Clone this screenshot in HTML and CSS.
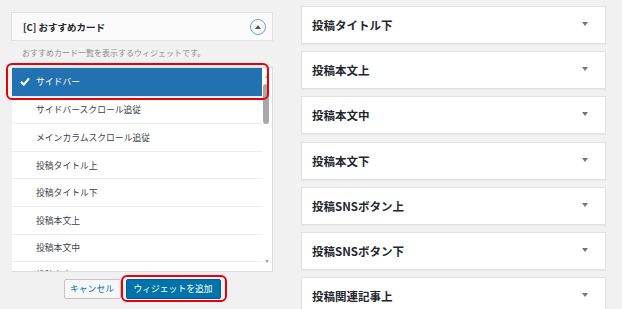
FILE: index.html
```html
<!DOCTYPE html>
<html lang="ja">
<head>
  <meta charset="UTF-8" />
  <title>ウィジェット</title>
  <link rel="stylesheet" href="styles.css">
</head>
<body>
  <div class="page">
    <!-- left: widget being added -->
    <div class="add-panel">
      <div class="widget-head">
        <span class="widget-title">[C] おすすめカード</span>
        <span class="toggle-circle"><span class="tri-up"></span></span>
      </div>
      <p class="widget-desc">おすすめカード一覧を表示するウィジェットです。</p>

      <div class="area-list-wrap">
        <div class="area-list">
          <ul class="areas">
            <li class="area selected">
              <svg class="check" width="10" height="9" viewBox="0 0 10 9"><path d="M1 4.8 L3.8 7.6 L9 1.4" fill="none" stroke="#fff" stroke-width="2.2"/></svg>
              サイドバー
            </li>
            <li class="area">サイドバースクロール追従</li>
            <li class="area">メインカラムスクロール追従</li>
            <li class="area">投稿タイトル上</li>
            <li class="area">投稿タイトル下</li>
            <li class="area">投稿本文上</li>
            <li class="area">投稿本文中</li>
            <li class="area last">投稿本文下</li>
          </ul>
          <div class="scrollbar">
            <span class="sb-up"></span>
            <span class="sb-thumb"></span>
            <span class="sb-down"></span>
          </div>
        </div>
        <div class="mark mark-list"></div>
      </div>

      <div class="actions">
        <button class="btn btn-cancel">キャンセル</button>
        <div class="btn-wrap">
          <button class="btn btn-primary">ウィジェットを追加</button>
          <div class="mark mark-btn"></div>
        </div>
      </div>
    </div>

    <!-- right: sidebar areas -->
    <div class="sidebars">
      <div class="sidebar-box"><span>投稿タイトル下</span><i class="arrow"></i></div>
      <div class="sidebar-box"><span>投稿本文上</span><i class="arrow"></i></div>
      <div class="sidebar-box"><span>投稿本文中</span><i class="arrow"></i></div>
      <div class="sidebar-box"><span>投稿本文下</span><i class="arrow"></i></div>
      <div class="sidebar-box"><span>投稿SNSボタン上</span><i class="arrow"></i></div>
      <div class="sidebar-box"><span>投稿SNSボタン下</span><i class="arrow"></i></div>
      <div class="sidebar-box"><span>投稿関連記事上</span><i class="arrow"></i></div>
    </div>
  </div>
</body>
</html>
```

FILE: styles.css
```css
:root {
  --bg: #f1f1f1;
  --border: #e2e2e2;
  --text: #23282d;
  --blue: #2271b1;
  --mark: #e8000b;
}
html, body {
  margin: 0;
  height: 100%;
  overflow: hidden;
}
body {
  background: var(--bg);
  font-family: "Noto Sans CJK JP", "Noto Sans", sans-serif;
  color: var(--text);
}
.page {
  display: flex;
  align-items: flex-start;
  padding-left: 11px;
}
.add-panel {
  width: 262px;
  padding-top: 12px;
}
.widget-head {
  height: 29px;
  box-sizing: border-box;
  border: 1px solid var(--border);
  background: #fafafa;
  display: flex;
  align-items: center;
  justify-content: space-between;
  padding: 0 6px 0 11px;
}
.widget-title {
  font-size: 9.5px;
  font-weight: bold;
}
.toggle-circle {
  width: 16px;
  height: 16px;
  box-sizing: border-box;
  border: 1px solid #6fa3d8;
  border-radius: 50%;
  display: flex;
  align-items: center;
  justify-content: center;
}
.tri-up {
  width: 0;
  height: 0;
  border-left: 3px solid transparent;
  border-right: 3px solid transparent;
  border-bottom: 4px solid #555;
}
.widget-desc {
  margin: 6px 0 8px 11px;
  font-size: 8px;
  line-height: 12px;
  color: #8a8a8a;
}
.area-list-wrap {
  position: relative;
  margin-left: 1px;
}
.area-list {
  display: flex;
  height: 205px;
  box-sizing: border-box;
  border: 1px solid #dcdcdc;
  border-left: none;
  background: #fff;
  overflow: hidden;
}
.areas {
  list-style: none;
  margin: 0;
  padding: 0;
  width: 250px;
  flex: none;
}
.area {
  height: 27.6px;
  box-sizing: border-box;
  display: flex;
  align-items: center;
  padding-left: 24px;
  font-size: 8.8px;
  color: #3c434a;
  border-top: 1px solid #ececec;
}
.area.last {
  align-items: flex-start;
  padding-top: 6px;
}
.area.selected {
  background: var(--blue);
  color: #fff;
  border-top: none;
  padding-left: 8px;
}
.check {
  margin-right: 6px;
}
.scrollbar {
  flex: 1;
  position: relative;
  background: #fff;
}
.sb-up, .sb-down {
  position: absolute;
  left: 3px;
  width: 0;
  height: 0;
  border-left: 2.5px solid transparent;
  border-right: 2.5px solid transparent;
}
.sb-up {
  top: 7px;
  border-bottom: 3px solid #a3a3a3;
}
.sb-down {
  bottom: 8px;
  border-top: 3px solid #a3a3a3;
}
.sb-thumb {
  position: absolute;
  top: 16px;
  left: 1px;
  width: 6px;
  height: 40px;
  border-radius: 3px;
  background: #a8a8a8;
}
.mark {
  position: absolute;
  box-sizing: border-box;
  border: 2px solid var(--mark);
  border-radius: 6px;
  pointer-events: none;
}
.mark-list {
  left: -6px;
  top: -4px;
  width: 263px;
  height: 37px;
}
.actions {
  display: flex;
  align-items: flex-start;
  justify-content: center;
  gap: 5px;
  margin-top: 7px;
}
.btn-wrap {
  position: relative;
  display: flex;
}
.btn {
  height: 20px;
  box-sizing: border-box;
  font-family: inherit;
  font-size: 8.8px;
  line-height: 1;
  white-space: nowrap;
  border-radius: 2px;
  padding: 0;
  margin: 0;
}
.btn-cancel {
  width: 57px;
  background: #f7f7f7;
  border: 1px solid #c4c4c4;
  color: #0073aa;
}
.btn-primary {
  width: 95px;
  background: #0073aa;
  border: 1px solid #006294;
  color: #fff;
}
.mark-btn {
  left: -5px;
  top: -4px;
  width: 106px;
  height: 27px;
}
.sidebars {
  margin-left: 28px;
  padding-top: 6px;
  width: 305px;
  display: flex;
  flex-direction: column;
  gap: 7.2px;
}
.sidebar-box {
  height: 38px;
  box-sizing: border-box;
  background: #fff;
  border: 1px solid var(--border);
  box-shadow: 0 1px 1px rgba(0, 0, 0, 0.04);
  display: flex;
  align-items: center;
  justify-content: space-between;
  padding: 0 17px 0 10px;
  font-size: 11.5px;
  font-weight: bold;
}
.arrow {
  width: 0;
  height: 0;
  border-left: 3px solid transparent;
  border-right: 3px solid transparent;
  border-top: 4px solid #72777c;
  margin-top: -2px;
}
```
